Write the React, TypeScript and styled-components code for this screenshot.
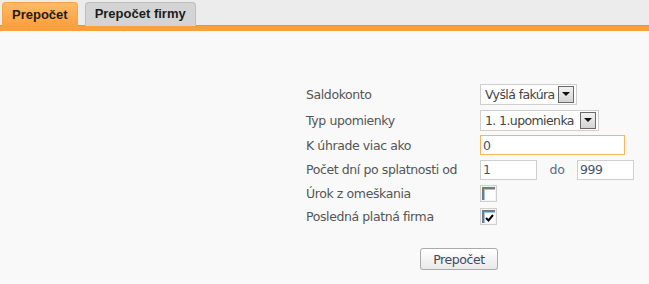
import React from "react";
import styled, { createGlobalStyle } from "styled-components";

const Global = createGlobalStyle`
  html, body { margin: 0; padding: 0; background: #f9f9f9; }
  body { font-family: "DejaVu Sans", Verdana, sans-serif; font-size: 12.5px; letter-spacing: -0.4px; color: #555; }
`;

const Header = styled.div`
  display: flex;
  align-items: flex-end;
  gap: 7px;
  height: 26px;
  padding-left: 2px;
  background: #ececec;
  border-bottom: 5px solid #fca03c;
  box-shadow: inset 0 -1px 0 #e8912f;
  box-sizing: content-box;
`;

const Tab = styled.div<{ $active?: boolean }>`
  display: flex;
  align-items: center;
  box-sizing: border-box;
  height: ${(p) => (p.$active ? "25px" : "24px")};
  margin-bottom: ${(p) => (p.$active ? "-1px" : "0")};
  padding: 0 9px 2px;
  font-family: "Liberation Sans", Arial, sans-serif;
  letter-spacing: 0;
  font-weight: bold;
  font-size: 13px;
  color: #1c1c1c;
  border-radius: 4px 4px 0 0;
  border: 1px solid ${(p) => (p.$active ? "#f4a345" : "#bdbdbd")};
  border-bottom: none;
  background: ${(p) =>
    p.$active ? "linear-gradient(#fdbb6a, #fb9f3a)" : "#d4d4d4"};
`;

const Content = styled.div`
  padding: 50px 0 0 306px;
`;

const Row = styled.div<{ $h: number }>`
  display: grid;
  grid-template-columns: 174px auto;
  align-items: center;
  height: ${(p) => p.$h}px;
`;

const Label = styled.div`
  color: #555;
`;

const Controls = styled.div`
  display: flex;
  align-items: center;
`;

const Select = styled.div<{ $w: number }>`
  display: flex;
  align-items: center;
  justify-content: space-between;
  box-sizing: border-box;
  width: ${(p) => p.$w}px;
  height: 21px;
  background: #fff;
  border: 1px solid #cfcfcf;
  padding: 0 2px 0 4px;
  color: #444;
  letter-spacing: -0.6px;
`;

const Arrow = styled.div`
  display: flex;
  align-items: center;
  justify-content: center;
  box-sizing: border-box;
  width: 16px;
  height: 17px;
  border: 1px solid #6a6a6a;
  background: linear-gradient(#f2f2f2, #d4d4d4);
  &::after {
    content: "";
    border-left: 4px solid transparent;
    border-right: 4px solid transparent;
    border-top: 4px solid #111;
  }
`;

const Input = styled.div<{ $w: number; $focus?: boolean }>`
  display: flex;
  align-items: center;
  box-sizing: border-box;
  width: ${(p) => p.$w}px;
  height: 20px;
  background: #fff;
  border: 1px solid ${(p) => (p.$focus ? "#f8b45e" : "#cfcfcf")};
  padding-left: 2px;
  color: #44546a;
`;

const Between = styled.span`
  width: 40px;
  text-align: center;
  color: #5a6a86;
`;

const CheckOuter = styled.div`
  display: flex;
  align-items: center;
  justify-content: center;
  box-sizing: border-box;
  width: 17px;
  height: 17px;
  border: 1px solid #cfcfcf;
  background: #f4f4f4;
`;

const CheckInner = styled.div`
  box-sizing: border-box;
  width: 13px;
  height: 13px;
  background: #fff;
  border-top: 2px solid #7a7a7a;
  border-left: 2px solid #7a7a7a;
  box-shadow: inset 1px 1px 0 #9cc4ee;
  display: flex;
  align-items: center;
  justify-content: center;
`;

const Button = styled.div`
  display: flex;
  align-items: center;
  justify-content: center;
  box-sizing: border-box;
  width: 78px;
  height: 22px;
  margin: 20px 0 0 114px;
  border: 1px solid #aaa;
  border-radius: 3px;
  background: linear-gradient(#ffffff, #e9e9e9);
  box-shadow: 0 1px 0 #d0d0d0;
  color: #3e4a5e;
`;

const Check = ({ on }: { on?: boolean }) => (
  <CheckOuter>
    <CheckInner>
      {on && (
        <svg width="9" height="8" viewBox="0 0 9 8">
          <path d="M1 4 L3.5 6.5 L8 1" stroke="#000" strokeWidth="2" fill="none" />
        </svg>
      )}
    </CheckInner>
  </CheckOuter>
);

export default function App() {
  return (
    <>
      <Global />
      <Header>
        <Tab $active>Prepočet</Tab>
        <Tab>Prepočet firmy</Tab>
      </Header>
      <Content>
        <Row $h={26}>
          <Label>Saldokonto</Label>
          <Controls>
            <Select $w={97}>
              Vyšlá fakúra
              <Arrow />
            </Select>
          </Controls>
        </Row>
        <Row $h={26}>
          <Label>Typ upomienky</Label>
          <Controls>
            <Select $w={119}>
              1. 1.upomienka
              <Arrow />
            </Select>
          </Controls>
        </Row>
        <Row $h={24}>
          <Label>K úhrade viac ako</Label>
          <Controls>
            <Input $w={145} $focus>0</Input>
          </Controls>
        </Row>
        <Row $h={25}>
          <Label>Počet dní po splatnosti od</Label>
          <Controls>
            <Input $w={57}>1</Input>
            <Between>do</Between>
            <Input $w={57}>999</Input>
          </Controls>
        </Row>
        <Row $h={23}>
          <Label>Úrok z omeškania</Label>
          <Controls>
            <Check />
          </Controls>
        </Row>
        <Row $h={23}>
          <Label>Posledná platná firma</Label>
          <Controls>
            <Check on />
          </Controls>
        </Row>
        <Button>Prepočet</Button>
      </Content>
    </>
  );
}
